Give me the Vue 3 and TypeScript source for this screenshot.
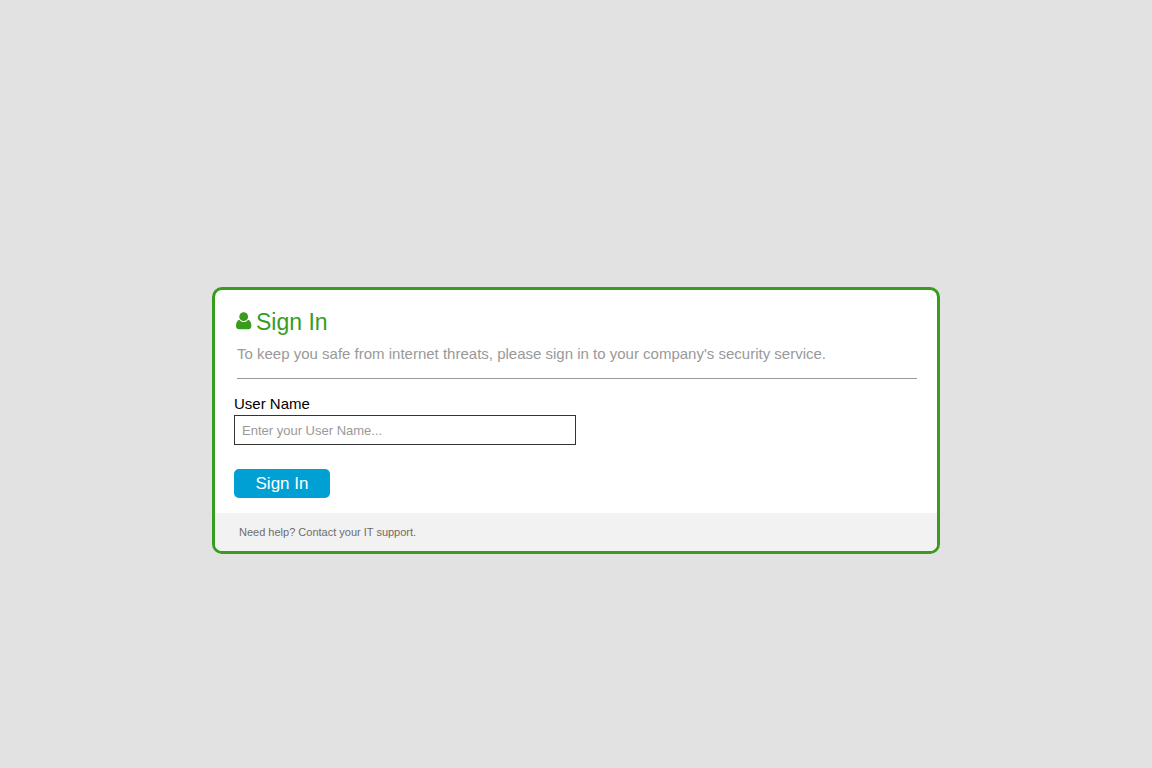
<script setup lang="ts">
import { ref } from 'vue'

const userName = ref<string>('')
</script>

<template>
  <main class="page">
    <section class="card">
      <div class="content">
        <header class="intro">
          <h1 class="title">
            <svg class="user-icon" viewBox="0 0 16 18" aria-hidden="true">
              <circle cx="7.700" cy="4.700" r="4.400" />
              <path d="M3.400 7.800C1 8.300 0 11 0 14c0 2 1.100 3.200 2.800 3.200h9.800c1.700 0 2.800-1.200 2.800-3.200 0-3-1-5.700-3.400-6.200C11 9.400 9.500 10.100 7.700 10.100S4.400 9.400 3.400 7.800Z" />
            </svg>
            <span>Sign In</span>
          </h1>
          <p class="lead">To keep you safe from internet threats, please sign in to your company's security service.</p>
        </header>
        <form class="form" @submit.prevent>
          <label class="label" for="user-name">User Name</label>
          <input id="user-name" v-model="userName" class="field" type="text" placeholder="Enter your User Name..." />
          <button class="submit" type="submit">Sign In</button>
        </form>
      </div>
      <footer class="help">Need help? Contact your IT support.</footer>
    </section>
  </main>
</template>

<style>
body {
  margin: 0;
  background: #e2e2e2;
}
</style>

<style scoped>
.page {
  box-sizing: border-box;
  min-height: 100vh;
  padding: 73px 16px 0;
  display: flex;
  align-items: center;
  justify-content: center;
  font-family: "Liberation Sans", Arial, sans-serif;
}

.card {
  box-sizing: border-box;
  width: 100%;
  max-width: 728px;
  border: 3px solid #399c1e;
  border-radius: 10px;
  background: #fff;
  overflow: hidden;
}

.content {
  padding: 18px 20px 15px 19px;
}

.intro {
  margin-left: 3px;
  padding-bottom: 14px;
  border-bottom: 1px solid #999;
}

.title {
  display: flex;
  align-items: center;
  gap: 4px;
  margin: 0 0 0 -1px;
  color: #399c1e;
  font-size: 23px;
  font-weight: 400;
  line-height: 28px;
}

.user-icon {
  width: 16px;
  height: 18px;
  margin-bottom: 2px;
  fill: currentColor;
}

.lead {
  margin: 8px 0 0;
  color: #999;
  font-size: 15px;
  line-height: 20px;
}

.form {
  display: flex;
  flex-direction: column;
  align-items: flex-start;
  padding-top: 15px;
}

.label {
  color: #000;
  font-size: 15px;
  line-height: 20px;
}

.field {
  box-sizing: border-box;
  width: 100%;
  max-width: 342px;
  height: 30px;
  margin: 1px 0 24px;
  padding: 1px 7px 0;
  border: 1px solid #333;
  border-radius: 0;
  background: #fff;
  color: #000;
  font-family: inherit;
  font-size: 13px;
}

.field::placeholder {
  color: #999;
  opacity: 1;
}

.submit {
  width: 96px;
  height: 29px;
  padding: 0;
  border: 0;
  border-radius: 5px;
  background: #009fd4;
  color: #fff;
  font-family: inherit;
  font-size: 17px;
  line-height: 28px;
  cursor: pointer;
}

.help {
  padding: 12px 24px;
  background: #f2f2f2;
  color: #6c6c6c;
  font-size: 11px;
  line-height: 14px;
}
</style>
